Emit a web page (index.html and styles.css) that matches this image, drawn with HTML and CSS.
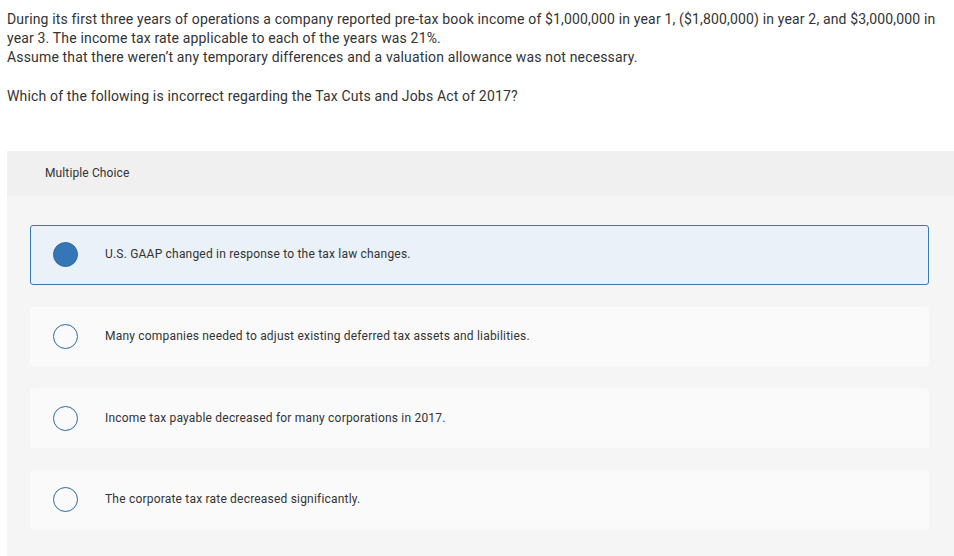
FILE: index.html
```html
<!DOCTYPE html>
<html>
<head>
<meta charset="utf-8">
<link rel="stylesheet" href="styles.css">
</head>
<body>
<div class="page">
  <div class="question">
    <p class="q-line">During its first three years of operations a company reported pre-tax book income of $1,000,000 in year 1, ($1,800,000) in year 2, and $3,000,000 in year 3. The income tax rate applicable to each of the years was 21%.<br>Assume that there weren’t any temporary differences and a valuation allowance was not necessary.</p>
    <p class="q-ask">Which of the following is incorrect regarding the Tax Cuts and Jobs Act of 2017?</p>
  </div>
  <div class="panel">
    <div class="panel-head">Multiple Choice</div>
    <div class="panel-body">
      <div class="option selected"><span class="radio"></span><span class="opt-text">U.S. GAAP changed in response to the tax law changes.</span></div>
      <div class="option"><span class="radio"></span><span class="opt-text">Many companies needed to adjust existing deferred tax assets and liabilities.</span></div>
      <div class="option"><span class="radio"></span><span class="opt-text">Income tax payable decreased for many corporations in 2017.</span></div>
      <div class="option"><span class="radio"></span><span class="opt-text">The corporate tax rate decreased significantly.</span></div>
    </div>
  </div>
</div>
</body>
</html>
```
FILE: styles.css
```css
html, body {
  margin: 0;
  padding: 0;
  background: #ffffff;
}
body {
  font-family: Roboto, "Open Sans", sans-serif;
  color: #333333;
  overflow: hidden;
}
.page {
  padding: 10px 0 0 7px;
}
.question {
  width: 936px;
  font-size: 14px;
  letter-spacing: 0.16px;
  line-height: 19px;
}
.q-line {
  margin: 0;
}
.q-ask {
  margin: 20px 0 0 0;
}
.panel {
  margin-top: 45px;
}
.panel-head {
  background: #f0f0f0;
  height: 45px;
  display: flex;
  align-items: center;
  padding-left: 38px;
  padding-bottom: 1px;
  box-sizing: border-box;
  font-size: 12px;
  letter-spacing: 0.12px;
  color: #333;
}
.panel-body {
  background: #f5f5f5;
  padding: 29px 25px 40px 23px;
  display: flex;
  flex-direction: column;
  gap: 22px;
}
.option {
  height: 59.7px;
  box-sizing: border-box;
  background: #fafafa;
  border: 1px solid #fafafa;
  border-radius: 3px;
  display: flex;
  align-items: center;
  padding-left: 22px;
}
.option.selected {
  background: #eaf1f9;
  border-color: #3a77b6;
}
.radio {
  width: 25px;
  height: 25px;
  box-sizing: border-box;
  border: 1.5px solid #2d6aa5;
  border-radius: 50%;
  flex: none;
}
.selected .radio {
  background: #3576b6;
}
.opt-text {
  margin-left: 27px;
  font-size: 12px;
  letter-spacing: 0.2px;
  color: #333;
  padding-bottom: 1px;
}
```
